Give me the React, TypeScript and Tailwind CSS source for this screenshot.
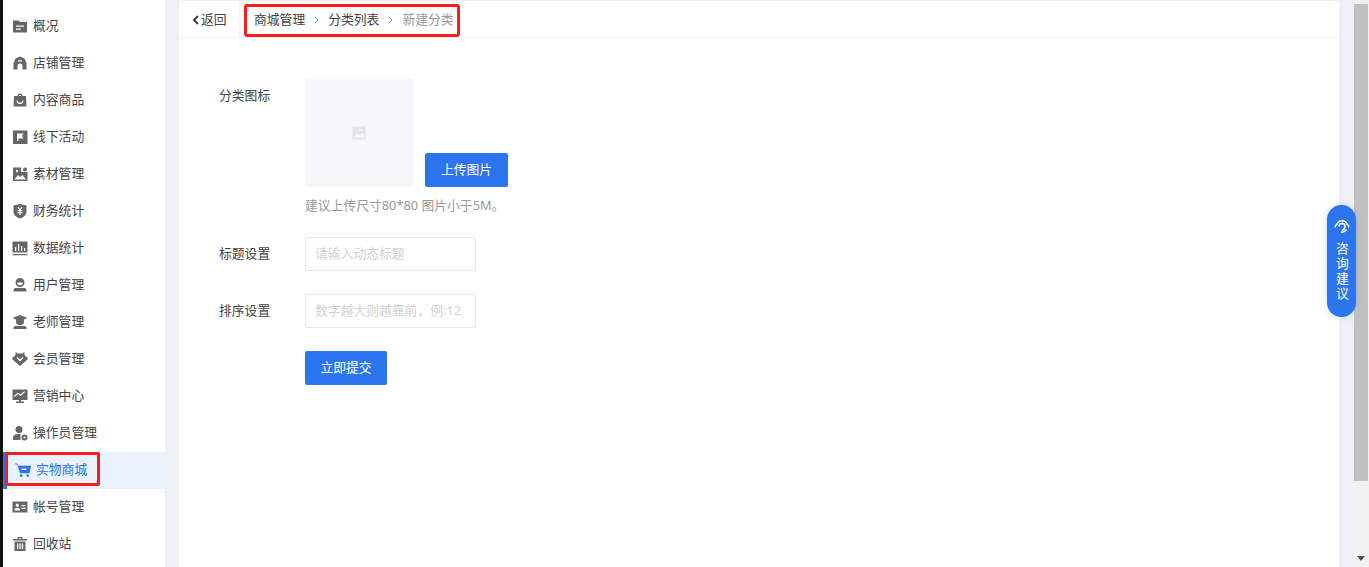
import type { ReactNode } from 'react';

const FONT = "font-['Noto_Sans','Noto_Sans_CJK_SC',sans-serif]";

function Glyph({ children, className = 'text-[#666]' }: { children: ReactNode; className?: string }) {
  return (
    <svg viewBox="0 0 16 16" className={`h-4 w-4 shrink-0 ${className}`} fill="currentColor">
      {children}
    </svg>
  );
}

const menu: { label: string; icon: ReactNode }[] = [
  {
    label: '概况',
    icon: (
      <path fillRule="evenodd" d="M1 2.500h5.500L8 4h7v10.500H1V2.500Zm3 5v1.300h8V7.500H4Zm0 3v1.300h5v-1.300H4Z" />
    ),
  },
  {
    label: '店铺管理',
    icon: (
      <path fillRule="evenodd" d="M8 1.500 12.500 3.500 14.500 8v6.500H10.500V11a2.500 2.500 0 0 0-5 0v3.500H1.500V8L3.500 3.500 8 1.500ZM6 5.300v1.200h4V5.300H6Z" />
    ),
  },
  {
    label: '内容商品',
    icon: (
      <path fillRule="evenodd" d="M5.500 4a2.500 2.500 0 0 1 5 0h3.500l.5 10.500H1.500L2 4h3.500Zm1.300 0h2.400a1.200 1.200 0 0 0-2.400 0ZM4.500 8.500a3.500 3.500 0 0 0 7 0h-1.300a2.200 2.200 0 0 1-4.400 0H4.500Z" />
    ),
  },
  {
    label: '线下活动',
    icon: <path fillRule="evenodd" d="M1 1.500h14.500V15H1V1.500Zm4 3V12h1.500V9.500H11.500l-1.500-2.500 1.500-2.500H5Z" />,
  },
  {
    label: '素材管理',
    icon: (
      <>
        <path d="M1 1.500h8v4.500h6.500V15H1V1.500Z" />
        <circle cx="13" cy="3.500" r="2" />
        <path fill="#fff" d="M2.500 13.500 6 9l2 2 2.500-2 3.500 4.500h-11.500Z" />
        <circle cx="5" cy="5" r="1.200" fill="#fff" />
      </>
    ),
  },
  {
    label: '财务统计',
    icon: (
      <path fillRule="evenodd" d="M8 1 14.500 2.500V9c0 3-3 5.500-6.500 6.500C4.500 14.500 1.500 12 1.500 9V2.500L8 1ZM5.500 4 7.200 7H5.500v1.200h1.900v.9H5.500v1.200h1.900V12h1.200v-1.700h1.900V9.100H8.600v-.9h1.900V7H8.800l1.700-3H9.100L8 6.200 6.900 4H5.500Z" />
    ),
  },
  {
    label: '数据统计',
    icon: (
      <path fillRule="evenodd" d="M.5 1.500h15v11H.5v-11Zm0 12.500h15v1.200H.5V14ZM3 7v4h1.200V7H3Zm3-3v7h1.200V4H6Zm3 2v5h1.200V6H9Zm3 2v3h1.200V8H12Z" />
    ),
  },
  {
    label: '用户管理',
    icon: (
      <path fillRule="evenodd" d="M8 1a4.500 4.500 0 1 1 0 9 4.500 4.500 0 0 1 0-9ZM5.200 5.500a2.800 2.800 0 0 0 5.600 0H5.200ZM3.500 11h9c1 0 1.800.8 2 2v1.500h-13V13c.2-1.200 1-2 2-2Z" />
    ),
  },
  {
    label: '老师管理',
    icon: (
      <>
        <path d="M8 1 15.500 4 12 5.500V7.500a4 3.500 0 0 1-8 0V5.500L.5 4 8 1Z" />
        <path d="M3.500 12h9c1 0 2 .8 2 1.800V15h-13v-1.200c0-1 1-1.800 2-1.800Z" />
      </>
    ),
  },
  {
    label: '会员管理',
    icon: (
      <path fillRule="evenodd" d="M3.500 1.500h1l1 1h5l1-1h1v2.500L15.500 7v1.500L8 15 .5 8.500V7l3-3V1.500ZM4.500 7 8 10.500 11.500 7l-1-1L8 8.500 5.500 6l-1 1Z" />
    ),
  },
  {
    label: '营销中心',
    icon: (
      <path fillRule="evenodd" d="M.5 1.500h15v10.500H9v1.500h3v1.500H4v-1.500h3V12H.5V1.500Zm2 7.500 3.500-3 2.500 2 4.500-4-.8-.8-3.700 3.300L6 4.500 1.800 8.200l.7.8Z" />
    ),
  },
  {
    label: '操作员管理',
    icon: (
      <>
        <circle cx="7" cy="4.500" r="3.500" />
        <path d="M1 15v-2c0-2.500 2-4 5-4h2.500v6H1Z" />
        <path fillRule="evenodd" d="M12.500 9.500a3 3 0 1 1 0 6 3 3 0 0 1 0-6Zm0 2a1 1 0 1 0 0 2 1 1 0 0 0 0-2Z" />
      </>
    ),
  },
];

const menuAfter: { label: string; icon: ReactNode }[] = [
  {
    label: '帐号管理',
    icon: (
      <path fillRule="evenodd" d="M.5 2.500h15v11H.5v-11Zm4.800 2a1.700 1.700 0 1 0 0 3.400 1.700 1.700 0 0 0 0-3.400ZM2.500 11.500h5.600c0-1.700-1.200-2.800-2.800-2.800s-2.800 1.100-2.800 2.800ZM9.500 6v1.200h4V6h-4Zm0 2.800V10h4V8.800h-4Z" />
    ),
  },
  {
    label: '回收站',
    icon: (
      <path fillRule="evenodd" d="M5.500 1h5v2h4.500v1.500H1V3h4.500V1Zm1.300 1.200V3h2.400v-.8H6.800ZM2.500 5.500h11V15h-11V5.500ZM5 7.500V13h1.300V7.500H5Zm2.400 0V13h1.300V7.500H7.400Zm2.400 0V13h1.300V7.500H9.800Z" />
    ),
  },
];

function MenuRow({ label, icon }: { label: string; icon: ReactNode }) {
  return (
    <div className="flex h-[37px] items-center gap-[5px] pb-[2px] pl-[9px] text-[12.8px] text-[#444]">
      <Glyph>{icon}</Glyph>
      <span>{label}</span>
    </div>
  );
}

function ActiveRow() {
  return (
    <div className="relative flex h-[37px] items-center gap-[4px] border-l-4 border-[#2b75ef] bg-[#ebf2ff] pb-[1px] pl-[8px] text-[12.8px] text-[#2b75ef]">
      <svg viewBox="0 0 18 16" className="h-4 w-[17px] shrink-0" fill="currentColor">
        <path d="M0 1h2.200l1.500 2.500H17l-1.600 8H5.200L2.800 3.200 1.500 2H0V1Zm7 5.500v1.500h5V6.500H7Z" fillRule="evenodd" />
        <circle cx="6.500" cy="14" r="1.400" />
        <circle cx="13.500" cy="14" r="1.400" />
      </svg>
      <span>实物商城</span>
      <div className="absolute left-[-2px] top-0 h-[34px] w-[95px] rounded-[2px] border-[3px] border-[#fb1c1c]" />
    </div>
  );
}

function Sidebar() {
  return (
    <aside className="flex w-[162px] shrink-0 flex-col bg-white pt-[8px]">
      {menu.map((item) => (
        <MenuRow key={item.label} label={item.label} icon={item.icon} />
      ))}
      <ActiveRow />
      {menuAfter.map((item) => (
        <MenuRow key={item.label} label={item.label} icon={item.icon} />
      ))}
    </aside>
  );
}

function Chevron() {
  return (
    <svg viewBox="0 0 5 8" className="mx-[9px] h-[8px] w-[5px] text-[#888]" fill="none" stroke="currentColor" strokeWidth="1">
      <path d="m1 .8 3 3.200-3 3.200" />
    </svg>
  );
}

function Header() {
  return (
    <div className="flex h-[37px] items-center border-b border-[#f2f3f5] pl-[13px] text-[12.8px] text-[#444]">
      <div className="flex w-[48px] shrink-0 items-center self-stretch border-r border-[#f2f3f5] pt-[1px]">
        <svg viewBox="0 0 8 10" className="mr-[1px] h-[10px] w-[8px]" fill="none" stroke="#333" strokeWidth="1.800">
          <path d="M6 1 2 5l4 4" />
        </svg>
        <span>返回</span>
      </div>
      <nav className="relative flex h-full items-center pl-[14px] pt-[1px]">
        <span>商城管理</span>
        <Chevron />
        <span>分类列表</span>
        <Chevron />
        <span className="text-[#999]">新建分类</span>
        <div className="absolute left-[4px] top-[3px] h-[33px] w-[216px] rounded-[3px] border-[3px] border-[#fb1c1c]" />
      </nav>
    </div>
  );
}

function FormLabel({ children, className = '' }: { children: ReactNode; className?: string }) {
  return <label className={`w-[86px] shrink-0 text-[12.8px] text-[#444] ${className}`}>{children}</label>;
}

function TextField({ placeholder }: { placeholder: string }) {
  return (
    <div className="flex h-[34px] w-[171px] items-center rounded-[2px] border border-[#e6e6e6] pl-[9px] text-[12.8px] text-[#d2d2d2]">
      {placeholder}
    </div>
  );
}

function BlueButton({ children, className = '' }: { children: ReactNode; className?: string }) {
  return (
    <button className={`flex h-[34px] items-center justify-center rounded-[2px] bg-[#2b75ef] text-[12.8px] text-white ${className}`}>
      {children}
    </button>
  );
}

function Form() {
  return (
    <div className="flex flex-col pl-[40px] pt-[41px]">
      <div className="flex">
        <FormLabel className="pt-[7px] leading-[18px]">分类图标</FormLabel>
        <div>
          <div className="flex items-end gap-[12px]">
            <div className="flex h-[108px] w-[108px] items-center justify-center rounded-[2px] bg-[#f6f7f9]">
              <svg viewBox="0 0 14 14" className="h-[14px] w-[14px]" fill="#e1e4e9">
                <path fillRule="evenodd" d="M.5.500h13v13H.5V.500Zm1.500 11h10V9L10 6.500 7.500 9 5.500 7 2 11.500Zm6.500-9a1.200 1.200 0 1 0 0 2.400 1.200 1.200 0 0 0 0-2.400Z" />
              </svg>
            </div>
            <BlueButton className="w-[83px]">上传图片</BlueButton>
          </div>
          <p className="mt-[8px] text-[12.8px] leading-[20px] text-[#999]">建议上传尺寸80*80 图片小于5M。</p>
        </div>
      </div>
      <div className="mt-[22px] flex items-center">
        <FormLabel>标题设置</FormLabel>
        <TextField placeholder="请输入动态标题" />
      </div>
      <div className="mt-[23px] flex items-center">
        <FormLabel>排序设置</FormLabel>
        <TextField placeholder="数字越大则越靠前，例:12" />
      </div>
      <div className="mt-[23px] pl-[86px]">
        <BlueButton className="w-[82px]">立即提交</BlueButton>
      </div>
    </div>
  );
}

function Scrollbar() {
  return (
    <div className="flex w-[16px] shrink-0 flex-col items-center bg-[#f1f1f1]">
      <div className="mt-[4px] h-[477px] w-[14px] bg-[#c1c1c1]" />
      <svg viewBox="0 0 8 5" className="mt-[75px] h-[5px] w-[8px]" fill="#505050">
        <path d="M0 0h8L4 5 0 0Z" />
      </svg>
    </div>
  );
}

function FloatingHelp() {
  return (
    <div className="absolute left-[1327px] top-[205px] flex h-[112px] w-[29px] flex-col items-center rounded-[14.500px] bg-[#2b75ef] pt-[13px] text-white shadow-[0_0_6px_rgba(43,117,239,0.25)]">
      <svg viewBox="0 0 16 16" className="h-[16px] w-[16px]" fill="none" stroke="currentColor" strokeWidth="1.500">
        <path d="M1.500 9.500a2 2 0 0 1 1.200-2.800 5.500 5.500 0 0 1 10.600 0 2 2 0 0 1 1.200 2.800" />
        <path d="M5 8.500a3 3 0 1 1 6 0c0 2-1.500 3-3 4.500" />
        <path d="M7 14c2 .5 4-.5 5.500-2.500" />
      </svg>
      <div className="mt-[8px] text-[12.8px] leading-[15px] tracking-[2.200px] [writing-mode:vertical-rl]">咨询建议</div>
    </div>
  );
}

export default function App() {
  return (
    <div className={`relative flex h-[567px] w-[1369px] overflow-hidden bg-[#eef0f6] ${FONT}`}>
      <div className="w-[3px] shrink-0 bg-[#111]" />
      <Sidebar />
      <main className="ml-[14px] mt-[1px] w-[1160px] shrink-0 bg-white">
        <Header />
        <Form />
      </main>
      <div className="w-[14px] shrink-0" />
      <Scrollbar />
      <FloatingHelp />
    </div>
  );
}
